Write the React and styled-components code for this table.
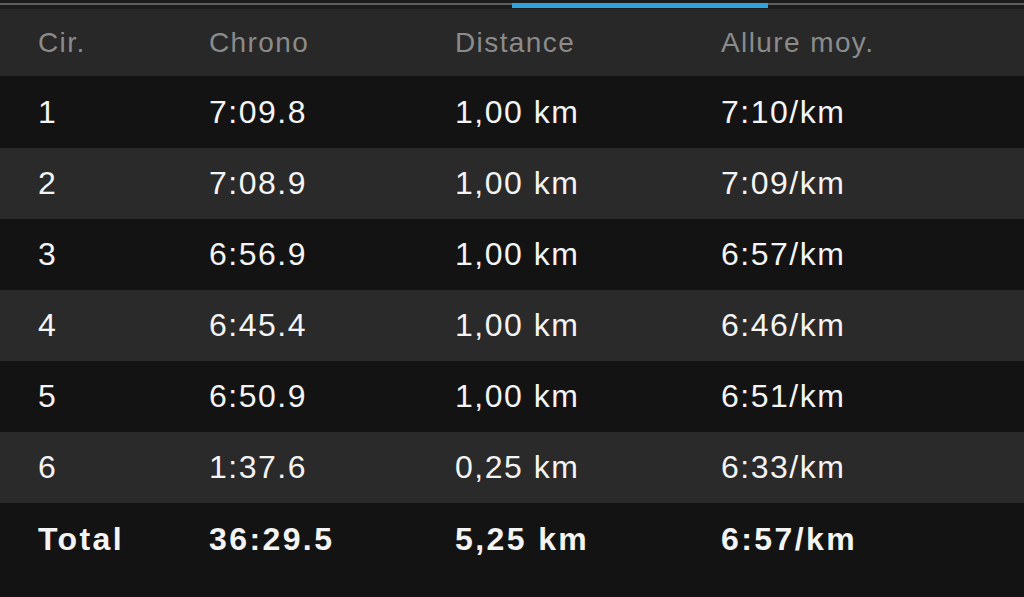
import React from "react";
import styled, { createGlobalStyle } from "styled-components";

const GlobalStyle = createGlobalStyle`
	html, body {
		margin: 0;
		padding: 0;
		background: #131313;
	}
	body {
		font-family: "Liberation Sans", Arial, sans-serif;
		-webkit-font-smoothing: antialiased;
	}
`;

//-----------------------------------------------------------------------------------------------

const Page = styled.div`
	width: 1024px;
	height: 597px;
	background: #131313;
	overflow: hidden;
`;

const TabTrack = styled.div`
	position: relative;
	height: 9px;
	background: #1c1c1c;

	&::before {
		content: "";
		position: absolute;
		left: 0;
		right: 0;
		top: 3px;
		height: 2px;
		background: #5e5e5e;
	}
`;

const TabIndicator = styled.div`
	position: absolute;
	left: 512px;
	width: 256px;
	top: 3px;
	height: 5px;
	background: #2fa3dc;
`;

const Row = styled.div`
	display: grid;
	grid-template-columns: 171px 246px 266px 1fr;
	align-items: center;
	padding-left: 38px;
	height: ${(p) => p.$height}px;
	background: ${(p) => p.$bg};
`;

const HeadCell = styled.div`
	font-size: 28px;
	letter-spacing: 1.4px;
	color: #8b8b8b;
`;

const Cell = styled.div`
	font-size: 32px;
	letter-spacing: ${(p) => (p.$bold ? 2.4 : 1.5)}px;
	color: #f4f4f4;
	font-weight: ${(p) => (p.$bold ? 700 : 400)};
`;

//-----------------------------------------------------------------------------------------------

const laps = [
	["1", "7:09.8", "1,00 km", "7:10/km"],
	["2", "7:08.9", "1,00 km", "7:09/km"],
	["3", "6:56.9", "1,00 km", "6:57/km"],
	["4", "6:45.4", "1,00 km", "6:46/km"],
	["5", "6:50.9", "1,00 km", "6:51/km"],
	["6", "1:37.6", "0,25 km", "6:33/km"],
];

const total = ["Total", "36:29.5", "5,25 km", "6:57/km"];

export default function App() {
	return (
		<>
			<GlobalStyle />
			<Page>
				<TabTrack>
					<TabIndicator />
				</TabTrack>

				<Row $height={67} $bg="#282828">
					<HeadCell>Cir.</HeadCell>
					<HeadCell>Chrono</HeadCell>
					<HeadCell>Distance</HeadCell>
					<HeadCell>Allure moy.</HeadCell>
				</Row>

				{laps.map((lap, i) => (
					<Row
						key={lap[0]}
						$height={i === 0 ? 72 : 71}
						$bg={i % 2 === 0 ? "#131313" : "#2a2a2a"}
					>
						{lap.map((value, j) => (
							<Cell key={j}>{value}</Cell>
						))}
					</Row>
				))}

				<Row $height={72} $bg="#131313">
					{total.map((value, j) => (
						<Cell key={j} $bold>
							{value}
						</Cell>
					))}
				</Row>
			</Page>
		</>
	);
}
